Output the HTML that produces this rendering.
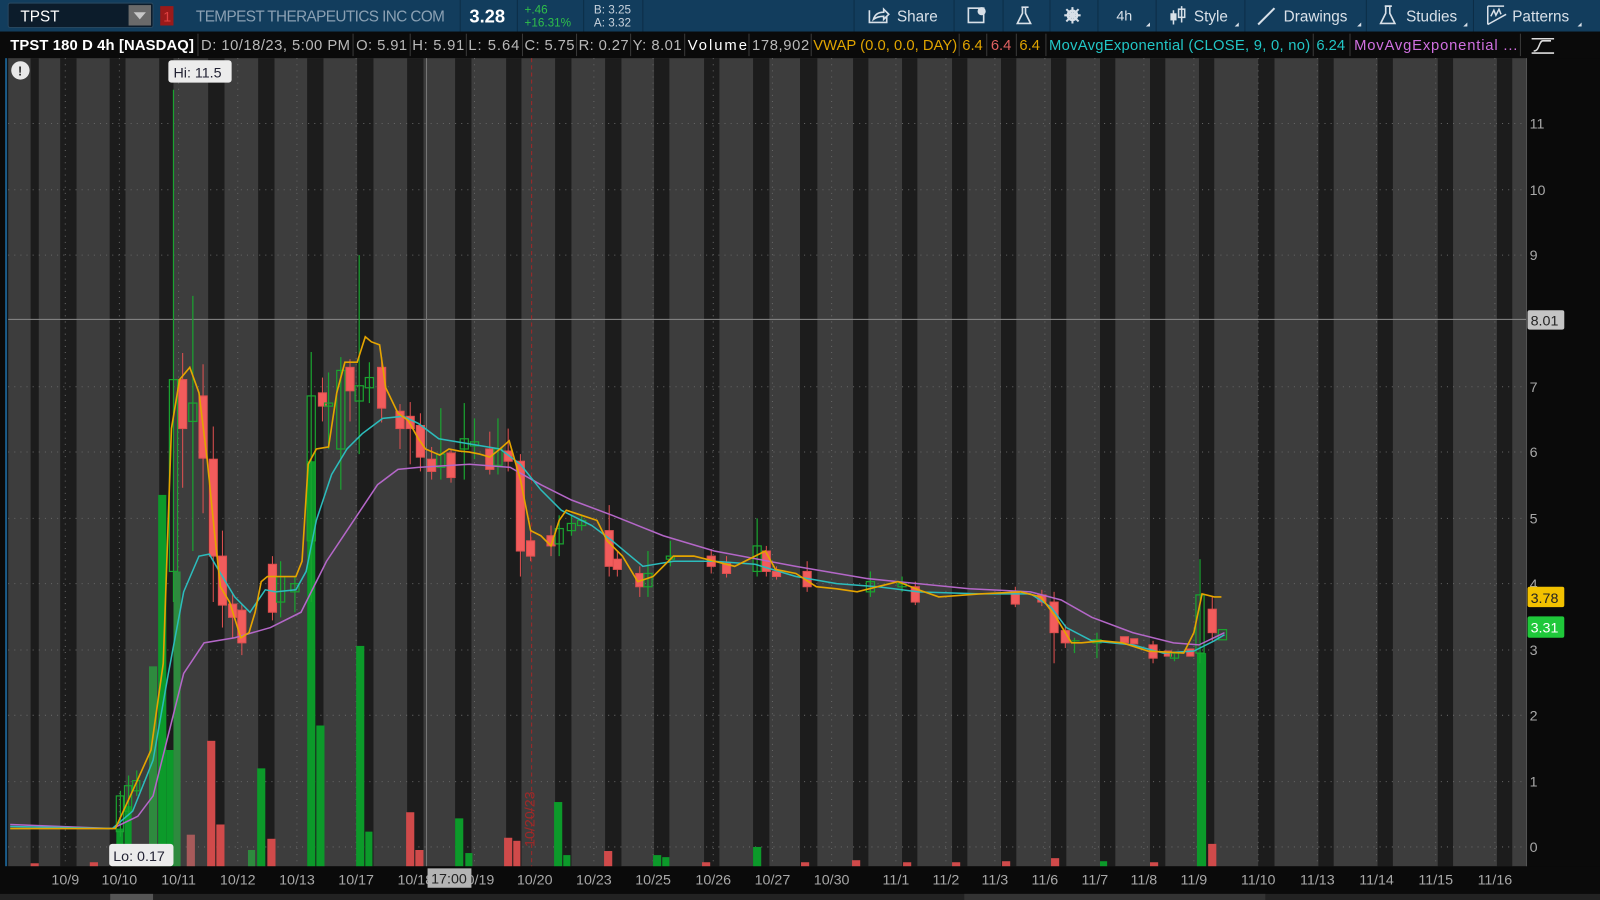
<!DOCTYPE html>
<html><head><meta charset="utf-8"><style>
html,body{margin:0;padding:0;background:#0a0a0a;overflow:hidden;width:1600px;height:900px}
svg{display:block}
text{font-family:"Liberation Sans",sans-serif}
</style></head><body>
<svg width="1600" height="900" viewBox="0 0 1568 882" preserveAspectRatio="none" xmlns="http://www.w3.org/2000/svg">
<!-- header -->
<rect x="0" y="0" width="1568" height="31" fill="#123d5d"/>
<rect x="8" y="3" width="142" height="24" rx="2" fill="#0c1c2b" stroke="#27475f"/>
<text x="20" y="21" font-size="15" fill="#fff">TPST</text>
<rect x="126" y="5" width="22" height="20" fill="#6a6a6a"/>
<path d="M131 12 L143 12 L137 19 Z" fill="#c8c8c8"/>
<rect x="157" y="6" width="13" height="19" fill="#9a1a1a"/>
<text x="160" y="21" font-size="14" fill="#e04040">1</text>
<text x="192" y="21" font-size="15" fill="#8aa0b3" textLength="244">TEMPEST THERAPEUTICS INC COM</text>
<line x1="451" y1="0" x2="451" y2="31" stroke="#0c2d47"/>
<text x="460" y="22" font-size="18" font-weight="bold" fill="#fff">3.28</text>
<line x1="507" y1="0" x2="507" y2="31" stroke="#0c2d47"/>
<text x="514" y="13" font-size="11.5" fill="#2fbf4a">+.46</text>
<text x="514" y="26" font-size="11.5" fill="#2fbf4a">+16.31%</text>
<line x1="572" y1="0" x2="572" y2="31" stroke="#0c2d47"/>
<text x="582" y="13" font-size="11.5" fill="#c8d2dc">B: 3.25</text>
<text x="582" y="26" font-size="11.5" fill="#c8d2dc">A: 3.32</text>
<line x1="630" y1="0" x2="630" y2="31" stroke="#0c2d47"/>
<g fill="#d8e0e8" font-size="15">
<line x1="837" y1="0" x2="837" y2="31" stroke="#0c2d47"/>
<path d="M852 10 v12 h17 v-6 M856 19 q2-7 10-7 v-3 l5 5 -5 5 v-3 q-6 0 -10 3z" fill="none" stroke="#d8e0e8" stroke-width="1.6"/>
<text x="879" y="21">Share</text>
<line x1="935" y1="0" x2="935" y2="31" stroke="#0c2d47"/>
<rect x="949" y="8" width="15" height="14" fill="none" stroke="#d8e0e8" stroke-width="1.6"/>
<circle cx="962" cy="11" r="4" fill="#d8e0e8"/>
<line x1="983" y1="0" x2="983" y2="31" stroke="#0c2d47"/>
<path d="M1001 7 h7 M1002 7 v6 l-5 10 h13 l-5-10 v-6" fill="none" stroke="#d8e0e8" stroke-width="1.6"/>
<line x1="1029" y1="0" x2="1029" y2="31" stroke="#0c2d47"/>
<circle cx="1051" cy="15" r="4.5" fill="none" stroke="#d8e0e8" stroke-width="2.5"/>
<path d="M1051 7 v16 M1043 15 h16 M1045 9 l12 12 M1057 9 l-12 12" stroke="#d8e0e8" stroke-width="2"/>
<line x1="1076" y1="0" x2="1076" y2="31" stroke="#0c2d47"/>
<text x="1094" y="20" font-size="14">4h</text>
<path d="M1123 26 l4-4 v4z"/>
<line x1="1133" y1="0" x2="1133" y2="31" stroke="#0c2d47"/>
<path d="M1150 10 v14 M1158 6 v16" stroke="#d8e0e8" stroke-width="1.5"/>
<rect x="1147" y="13" width="6" height="7"/><rect x="1155" y="9" width="6" height="8" fill="none" stroke="#d8e0e8" stroke-width="1.5"/>
<text x="1170" y="21">Style</text>
<path d="M1210 26 l4-4 v4z"/>
<line x1="1220" y1="0" x2="1220" y2="31" stroke="#0c2d47"/>
<path d="M1233 24 L1249 8" stroke="#d8e0e8" stroke-width="2"/>
<text x="1258" y="21">Drawings</text>
<path d="M1330 26 l4-4 v4z"/>
<line x1="1339" y1="0" x2="1339" y2="31" stroke="#0c2d47"/>
<path d="M1357 6 h7 M1358 6 v7 l-5 10 h14 l-5-10 v-7" fill="none" stroke="#d8e0e8" stroke-width="1.6"/>
<text x="1378" y="21">Studies</text>
<path d="M1434 26 l4-4 v4z"/>
<line x1="1444" y1="0" x2="1444" y2="31" stroke="#0c2d47"/>
<path d="M1458 6 h16 M1458 6 v18 M1458 24 l18-10 M1461 16 l3-6 2 5 3-6 2 5" fill="none" stroke="#d8e0e8" stroke-width="1.5"/>
<text x="1482" y="21">Patterns</text>
<path d="M1546 26 l4-4 v4z"/>
</g>
<!-- info row -->
<rect x="0" y="31" width="1568" height="26" fill="#0a0a0a"/>
<g stroke="#3a3a3a">
<line x1="194" y1="33" x2="194" y2="55"/><line x1="346" y1="33" x2="346" y2="55"/><line x1="402" y1="33" x2="402" y2="55"/><line x1="457" y1="33" x2="457" y2="55"/><line x1="512" y1="33" x2="512" y2="55"/><line x1="565" y1="33" x2="565" y2="55"/><line x1="618" y1="33" x2="618" y2="55"/><line x1="671" y1="33" x2="671" y2="55"/><line x1="734" y1="33" x2="734" y2="55"/><line x1="795" y1="33" x2="795" y2="55"/><line x1="940" y1="33" x2="940" y2="55"/><line x1="967" y1="33" x2="967" y2="55"/><line x1="996" y1="33" x2="996" y2="55"/><line x1="1025" y1="33" x2="1025" y2="55"/><line x1="1287" y1="33" x2="1287" y2="55"/><line x1="1323" y1="33" x2="1323" y2="55"/><line x1="1490" y1="33" x2="1490" y2="55"/>
</g>
<g font-size="14.5">
<text x="10" y="49" fill="#fff" font-weight="bold" textLength="180">TPST 180 D 4h [NASDAQ]</text>
<text x="197" y="49" fill="#b8b8b8" textLength="146">D: 10/18/23, 5:00 PM</text>
<text x="349" y="49" fill="#b8b8b8" textLength="50">O: 5.91</text>
<text x="404" y="49" fill="#b8b8b8" textLength="51">H: 5.91</text>
<text x="459" y="49" fill="#b8b8b8" textLength="50">L: 5.64</text>
<text x="514" y="49" fill="#b8b8b8" textLength="49">C: 5.75</text>
<text x="567" y="49" fill="#b8b8b8" textLength="49">R: 0.27</text>
<text x="620" y="49" fill="#b8b8b8" textLength="48">Y: 8.01</text>
<text x="674" y="49" fill="#fff" textLength="58">Volume</text>
<text x="737" y="49" fill="#b8b8b8" textLength="56">178,902</text>
<text x="797" y="49" fill="#e0a400" textLength="141">VWAP (0.0, 0.0, DAY)</text>
<text x="943" y="49" fill="#e0a400">6.4</text>
<text x="971" y="49" fill="#e06262">6.4</text>
<text x="999" y="49" fill="#e0a400">6.4</text>
<text x="1028" y="49" fill="#22c6c6" textLength="256">MovAvgExponential (CLOSE, 9, 0, no)</text>
<text x="1290" y="49" fill="#22c6c6">6.24</text>
<text x="1327" y="49" fill="#d070e0" textLength="160">MovAvgExponential ...</text>
</g>
<path d="M1501 38 h22 M1501 52 h22 M1503 50 c6 0 5 -10 9 -10 h8" fill="none" stroke="#ddd" stroke-width="1.5"/>
<!-- chart -->
<rect x="8" y="57" width="1488" height="792" fill="#3d3d3d"/>
<g fill="#1c1c1c">
<rect x="30" y="57" width="8" height="792"/>
<rect x="59" y="57" width="16" height="792"/><rect x="107.5" y="57" width="15.5" height="792"/><rect x="156" y="57" width="14" height="792"/><rect x="204" y="57" width="16" height="792"/><rect x="253" y="57" width="16" height="792"/><rect x="301" y="57" width="16" height="792"/><rect x="350" y="57" width="16" height="792"/><rect x="399" y="57" width="16" height="792"/><rect x="446" y="57" width="16" height="792"/><rect x="496" y="57" width="15" height="792"/><rect x="544" y="57" width="16" height="792"/><rect x="593" y="57" width="16" height="792"/><rect x="641" y="57" width="15" height="792"/><rect x="690" y="57" width="15" height="792"/><rect x="738" y="57" width="16" height="792"/><rect x="784" y="57" width="17" height="792"/><rect x="836" y="57" width="15" height="792"/><rect x="884" y="57" width="15" height="792"/><rect x="933" y="57" width="15" height="792"/><rect x="981" y="57" width="15" height="792"/><rect x="1030" y="57" width="15" height="792"/><rect x="1078" y="57" width="15" height="792"/><rect x="1127" y="57" width="15" height="792"/><rect x="1175" y="57" width="15" height="792"/><rect x="1233" y="57" width="16" height="792"/><rect x="1292" y="57" width="15" height="792"/><rect x="1350" y="57" width="15" height="792"/><rect x="1409" y="57" width="15" height="792"/><rect x="1467" y="57" width="15" height="792"/>
</g>
<rect x="5" y="57" width="2" height="792" fill="#1b5c8a"/>
<g stroke="#666" stroke-dasharray="1 5" stroke-width="1">
<line x1="8" y1="830" x2="1496" y2="830"/><line x1="8" y1="766" x2="1496" y2="766"/><line x1="8" y1="701" x2="1496" y2="701"/><line x1="8" y1="637" x2="1496" y2="637"/><line x1="8" y1="572" x2="1496" y2="572"/><line x1="8" y1="508" x2="1496" y2="508"/><line x1="8" y1="443" x2="1496" y2="443"/><line x1="8" y1="379" x2="1496" y2="379"/><line x1="8" y1="250" x2="1496" y2="250"/><line x1="8" y1="186" x2="1496" y2="186"/><line x1="8" y1="121" x2="1496" y2="121"/>
<line x1="64" y1="57" x2="64" y2="849"/><line x1="117" y1="57" x2="117" y2="849"/><line x1="175" y1="57" x2="175" y2="849"/><line x1="233" y1="57" x2="233" y2="849"/><line x1="291" y1="57" x2="291" y2="849"/><line x1="349" y1="57" x2="349" y2="849"/><line x1="465" y1="57" x2="465" y2="849"/><line x1="582" y1="57" x2="582" y2="849"/><line x1="640" y1="57" x2="640" y2="849"/><line x1="699" y1="57" x2="699" y2="849"/><line x1="757" y1="57" x2="757" y2="849"/><line x1="815" y1="57" x2="815" y2="849"/><line x1="878" y1="57" x2="878" y2="849"/><line x1="927" y1="57" x2="927" y2="849"/><line x1="975" y1="57" x2="975" y2="849"/><line x1="1024" y1="57" x2="1024" y2="849"/><line x1="1073" y1="57" x2="1073" y2="849"/><line x1="1121" y1="57" x2="1121" y2="849"/><line x1="1170" y1="57" x2="1170" y2="849"/><line x1="1233" y1="57" x2="1233" y2="849"/><line x1="1291" y1="57" x2="1291" y2="849"/><line x1="1349" y1="57" x2="1349" y2="849"/><line x1="1407" y1="57" x2="1407" y2="849"/><line x1="1465" y1="57" x2="1465" y2="849"/>
</g>
<line x1="8" y1="313" x2="1496" y2="313" stroke="#8a8a8a"/>
<line x1="418" y1="57" x2="418" y2="849" stroke="#777"/>
<line x1="521" y1="57" x2="521" y2="849" stroke="#a02828" stroke-dasharray="4 3"/>
<text transform="translate(524,830) rotate(-90)" font-size="14" fill="#a02828">10/20/23</text>
<!-- volume -->
<g fill="#0c9a2a">
<rect x="114" y="812" width="7" height="37"/><rect x="122" y="790" width="7" height="59"/><rect x="146" y="653" width="8" height="196" fill="#2e8a3e"/><rect x="155" y="485" width="8" height="364"/><rect x="163" y="735" width="7" height="114"/><rect x="170" y="560" width="7" height="289" fill="#2e8a3e"/>
<rect x="243" y="833" width="7" height="16" fill="#2e8a3e"/><rect x="252" y="753" width="8" height="96"/><rect x="301" y="452" width="8" height="397"/><rect x="310" y="711" width="8" height="138"/><rect x="349" y="633" width="8" height="216"/><rect x="358" y="815" width="7" height="34"/><rect x="446" y="802" width="8" height="47"/><rect x="456" y="836" width="7" height="13"/><rect x="543" y="786" width="8" height="63"/><rect x="552" y="838" width="7" height="11"/><rect x="640" y="838" width="8" height="11"/><rect x="649" y="840" width="7" height="9"/><rect x="738" y="830" width="8" height="19"/><rect x="1078" y="844" width="7" height="5"/><rect x="1173" y="640" width="9" height="209"/>
</g>
<g fill="#d04a4a">
<rect x="203" y="726" width="8" height="123"/><rect x="212" y="808" width="8" height="41"/><rect x="183" y="818" width="8" height="31" fill="#a85a5a"/><rect x="262" y="822" width="8" height="27"/><rect x="398" y="796" width="8" height="53"/><rect x="407" y="833" width="8" height="16"/><rect x="494" y="821" width="8" height="28"/><rect x="503" y="824" width="7" height="25"/><rect x="592" y="834" width="8" height="15"/><rect x="1184" y="827" width="8" height="22"/>
<rect x="30" y="846" width="8" height="3"/><rect x="88" y="845" width="8" height="4"/><rect x="688" y="845" width="8" height="4"/><rect x="835" y="843" width="8" height="6"/><rect x="933" y="845" width="8" height="4"/><rect x="982" y="844" width="8" height="5"/><rect x="1030" y="841" width="8" height="8"/><rect x="1127" y="845" width="8" height="4"/><rect x="785" y="845" width="8" height="4"/><rect x="885" y="845" width="8" height="4"/>
</g>
<!-- candles red -->
<g stroke="#e05050" fill="#f25c5c" stroke-width="1">
<line x1="179" y1="346" x2="179" y2="478"/><rect x="175" y="372" width="8" height="48"/>
<line x1="199" y1="357" x2="199" y2="503"/><rect x="195" y="388" width="8" height="61"/>
<line x1="209" y1="418" x2="209" y2="590"/><rect x="205" y="450" width="8" height="95"/>
<line x1="218" y1="520" x2="218" y2="615"/><rect x="214" y="545" width="8" height="48"/>
<line x1="228" y1="582" x2="228" y2="625"/><rect x="224" y="592" width="8" height="13"/>
<line x1="237" y1="592" x2="237" y2="642"/><rect x="233" y="598" width="8" height="32"/>
<line x1="267" y1="545" x2="267" y2="608"/><rect x="263" y="553" width="8" height="47"/>
<line x1="316" y1="370" x2="316" y2="413"/><rect x="312" y="385" width="8" height="13"/>
<line x1="343" y1="352" x2="343" y2="413"/><rect x="339" y="360" width="8" height="23"/>
<line x1="374" y1="350" x2="374" y2="414"/><rect x="370" y="360" width="8" height="40"/>
<line x1="392" y1="396" x2="392" y2="440"/><rect x="388" y="403" width="8" height="17"/>
<line x1="402" y1="394" x2="402" y2="455"/><rect x="398" y="408" width="8" height="12"/>
<line x1="412" y1="405" x2="412" y2="462"/><rect x="408" y="417" width="8" height="31"/>
<line x1="423" y1="438" x2="423" y2="470"/><rect x="419" y="450" width="8" height="12"/>
<line x1="442" y1="440" x2="442" y2="473"/><rect x="438" y="444" width="8" height="24"/>
<line x1="480" y1="423" x2="480" y2="465"/><rect x="476" y="440" width="8" height="20"/>
<line x1="498" y1="420" x2="498" y2="462"/><rect x="494" y="442" width="8" height="10"/>
<line x1="510" y1="445" x2="510" y2="565"/><rect x="506" y="452" width="8" height="88"/>
<line x1="520" y1="520" x2="520" y2="550"/><rect x="516" y="530" width="8" height="15"/>
<line x1="540" y1="515" x2="540" y2="545"/><rect x="536" y="525" width="8" height="10"/>
<line x1="597" y1="495" x2="597" y2="565"/><rect x="593" y="520" width="8" height="35"/>
<line x1="605" y1="540" x2="605" y2="565"/><rect x="601" y="548" width="8" height="10"/>
<line x1="627" y1="555" x2="627" y2="585"/><rect x="623" y="562" width="8" height="13"/>
<line x1="697" y1="538" x2="697" y2="562"/><rect x="693" y="545" width="8" height="10"/>
<line x1="712" y1="545" x2="712" y2="566"/><rect x="708" y="552" width="8" height="10"/>
<line x1="751" y1="535" x2="751" y2="565"/><rect x="747" y="540" width="8" height="20"/>
<line x1="761" y1="555" x2="761" y2="568"/><rect x="757" y="560" width="8" height="5"/>
<line x1="791" y1="550" x2="791" y2="580"/><rect x="787" y="560" width="8" height="15"/>
<line x1="897" y1="570" x2="897" y2="593"/><rect x="893" y="575" width="8" height="15"/>
<line x1="995" y1="575" x2="995" y2="595"/><rect x="991" y="580" width="8" height="12"/>
<line x1="1021" y1="578" x2="1021" y2="594"/><rect x="1017" y="583" width="8" height="7"/>
<line x1="1033" y1="580" x2="1033" y2="650"/><rect x="1029" y="590" width="8" height="30"/>
<line x1="1044" y1="612" x2="1044" y2="635"/><rect x="1040" y="618" width="8" height="12"/>
<line x1="1130" y1="628" x2="1130" y2="650"/><rect x="1126" y="632" width="8" height="13"/>
<line x1="1188" y1="585" x2="1188" y2="628"/><rect x="1184" y="597" width="8" height="23"/>
<rect x="1098" y="624" width="8" height="6"/><rect x="1108" y="626" width="7" height="5"/><rect x="1141" y="638" width="7" height="5"/><rect x="1163" y="636" width="7" height="7"/>
</g>
<!-- candles green -->
<g stroke="#1aa330" fill="none" stroke-width="1.2">
<line x1="170" y1="88" x2="170" y2="590"/><rect x="166" y="372" width="8" height="188"/>
<line x1="189" y1="290" x2="189" y2="540"/><rect x="185" y="395" width="8" height="18"/>
<line x1="275" y1="550" x2="275" y2="605"/><rect x="271" y="565" width="8" height="25"/>
<line x1="289" y1="565" x2="289" y2="600"/><rect x="285" y="572" width="8" height="8"/>
<line x1="305" y1="345" x2="305" y2="590"/><rect x="301" y="388" width="8" height="142"/>
<line x1="322" y1="365" x2="322" y2="440"/><rect x="318" y="395" width="8" height="3"/>
<line x1="334" y1="350" x2="334" y2="480"/><rect x="330" y="363" width="8" height="77"/>
<line x1="352" y1="250" x2="352" y2="445"/><rect x="348" y="378" width="8" height="15"/>
<line x1="362" y1="355" x2="362" y2="395"/><rect x="358" y="370" width="8" height="10"/>
<line x1="432" y1="400" x2="432" y2="470"/><rect x="428" y="445" width="8" height="13"/>
<line x1="455" y1="395" x2="455" y2="470"/><rect x="451" y="430" width="8" height="10"/>
<line x1="465" y1="410" x2="465" y2="450"/><rect x="461" y="433" width="8" height="4"/>
<line x1="488" y1="410" x2="488" y2="465"/><rect x="484" y="440" width="8" height="16"/>
<line x1="548" y1="505" x2="548" y2="545"/><rect x="544" y="518" width="8" height="15"/>
<line x1="560" y1="505" x2="560" y2="525"/><rect x="556" y="513" width="8" height="7"/>
<line x1="570" y1="505" x2="570" y2="520"/><rect x="566" y="510" width="8" height="5"/>
<line x1="635" y1="540" x2="635" y2="585"/><rect x="631" y="562" width="8" height="13"/>
<line x1="657" y1="530" x2="657" y2="555"/><rect x="653" y="545" width="8" height="3"/>
<line x1="742" y1="508" x2="742" y2="565"/><rect x="738" y="535" width="8" height="25"/>
<line x1="853" y1="560" x2="853" y2="585"/><rect x="849" y="570" width="8" height="10"/>
<line x1="884" y1="565" x2="884" y2="580"/><rect x="880" y="572" width="8" height="3"/>
<line x1="1053" y1="625" x2="1053" y2="640"/><line x1="1050" y1="628" x2="1058" y2="628"/>
<line x1="1075" y1="620" x2="1075" y2="645"/><rect x="1071" y="627" width="8" height="3"/>
<line x1="1151" y1="640" x2="1151" y2="648"/><rect x="1147" y="640" width="8" height="5"/>
<line x1="1176" y1="548" x2="1176" y2="650"/><rect x="1172" y="583" width="8" height="57"/>
<rect x="1194" y="617" width="8" height="10"/>
<line x1="118" y1="775" x2="118" y2="820"/><rect x="114" y="780" width="7" height="35"/>
<line x1="126" y1="760" x2="126" y2="800"/><rect x="122" y="770" width="7" height="25"/>
<line x1="134" y1="755" x2="134" y2="780"/><rect x="130" y="765" width="7" height="10"/>
</g>
<!-- lines -->
<polyline fill="none" stroke="#b467c8" stroke-width="1.5" points="10,808 110,812 135,800 150,780 165,720 180,660 200,630 230,625 265,615 295,600 320,550 350,505 370,475 390,460 410,458 460,455 500,458 530,475 560,490 600,505 650,525 700,540 780,555 850,567 950,577 1010,580 1040,588 1070,605 1110,620 1150,630 1175,632 1200,620"/>
<polyline fill="none" stroke="#2cbcbc" stroke-width="1.5" points="10,810 110,812 130,795 150,745 165,660 180,580 195,545 205,543 215,560 230,585 245,600 260,578 270,580 290,578 300,560 310,510 325,465 340,440 355,425 375,410 395,408 410,415 430,430 460,435 490,440 510,455 530,480 550,500 580,515 600,530 630,555 660,550 700,550 740,553 780,565 820,572 860,575 900,580 960,582 1010,582 1030,595 1045,615 1070,628 1110,632 1140,640 1170,638 1190,628 1200,622"/>
<polyline fill="none" stroke="#e5a400" stroke-width="1.6" points="10,812 95,812 113,812 130,775 148,735 160,650 168,420 176,372 186,360 195,385 203,450 210,520 216,575 225,590 236,625 244,620 250,600 256,570 262,565 290,565 296,550 302,455 310,440 322,438 330,385 338,355 350,355 358,330 364,335 372,338 378,380 390,405 400,412 410,430 417,440 431,446 440,440 450,442 460,443 470,445 480,448 490,440 499,432 510,470 520,520 530,525 540,535 548,510 555,500 570,505 585,510 595,530 610,545 625,570 640,565 660,545 680,545 700,550 720,555 740,545 750,540 760,558 780,562 800,575 820,577 840,580 880,570 900,578 920,585 960,582 1000,580 1020,585 1035,605 1050,630 1060,630 1080,628 1100,630 1125,638 1160,640 1170,620 1178,582 1190,585 1197,585"/>
<!-- labels -->
<circle cx="20" cy="69" r="9" fill="#e8e8e8"/><text x="17.5" y="74" font-size="13" font-weight="bold" fill="#333">!</text>
<rect x="165" y="59" width="62" height="22" rx="3" fill="#ececec"/>
<text x="170" y="76" font-size="14" fill="#223">Hi: 11.5</text>
<rect x="107" y="827" width="63" height="22" rx="3" fill="#ececec"/>
<text x="111" y="844" font-size="14" fill="#223">Lo: 0.17</text>
<!-- price axis -->
<rect x="1496" y="57" width="72" height="792" fill="#0a0a0a"/>
<line x1="1496" y1="57" x2="1496" y2="849" stroke="#555"/>
<g font-size="14" fill="#a8a8a8">
<text x="1499" y="835">0</text><text x="1499" y="771">1</text><text x="1499" y="706">2</text><text x="1499" y="642">3</text><text x="1499" y="577">4</text><text x="1499" y="513">5</text><text x="1499" y="448">6</text><text x="1499" y="384">7</text><text x="1499" y="255">9</text><text x="1499" y="191">10</text><text x="1499" y="126">11</text>
</g>
<rect x="1497" y="304" width="36" height="19" rx="2" fill="#c4c4c4"/><text x="1500" y="319" font-size="14" fill="#222">8.01</text>
<rect x="1497" y="575" width="36" height="20" rx="2" fill="#f2c100"/><text x="1500" y="591" font-size="14" fill="#222">3.78</text>
<rect x="1497" y="604" width="36" height="21" rx="2" fill="#1fc83a"/><text x="1500" y="620" font-size="14" fill="#fff">3.31</text>
<!-- date axis -->
<rect x="0" y="849" width="1568" height="33" fill="#0a0a0a"/>
<g font-size="14" fill="#a8a8a8" text-anchor="middle">
<text x="64" y="867">10/9</text><text x="117" y="867">10/10</text><text x="175" y="867">10/11</text><text x="233" y="867">10/12</text><text x="291" y="867">10/13</text><text x="349" y="867">10/17</text><text x="407" y="867">10/18</text><text x="467" y="867">10/19</text><text x="524" y="867">10/20</text><text x="582" y="867">10/23</text><text x="640" y="867">10/25</text><text x="699" y="867">10/26</text><text x="757" y="867">10/27</text><text x="815" y="867">10/30</text><text x="878" y="867">11/1</text><text x="927" y="867">11/2</text><text x="975" y="867">11/3</text><text x="1024" y="867">11/6</text><text x="1073" y="867">11/7</text><text x="1121" y="867">11/8</text><text x="1170" y="867">11/9</text><text x="1233" y="867">11/10</text><text x="1291" y="867">11/13</text><text x="1349" y="867">11/14</text><text x="1407" y="867">11/15</text><text x="1465" y="867">11/16</text>
</g>
<rect x="419" y="851" width="43" height="19" fill="#b4b4b4"/><text x="440" y="866" font-size="14" fill="#222" text-anchor="middle">17:00</text>
<rect x="0" y="876" width="1568" height="6" fill="#222"/>
<rect x="108" y="876" width="42" height="6" fill="#555"/>
<rect x="945" y="876" width="295" height="6" fill="#333"/>
</svg>
</body></html>
